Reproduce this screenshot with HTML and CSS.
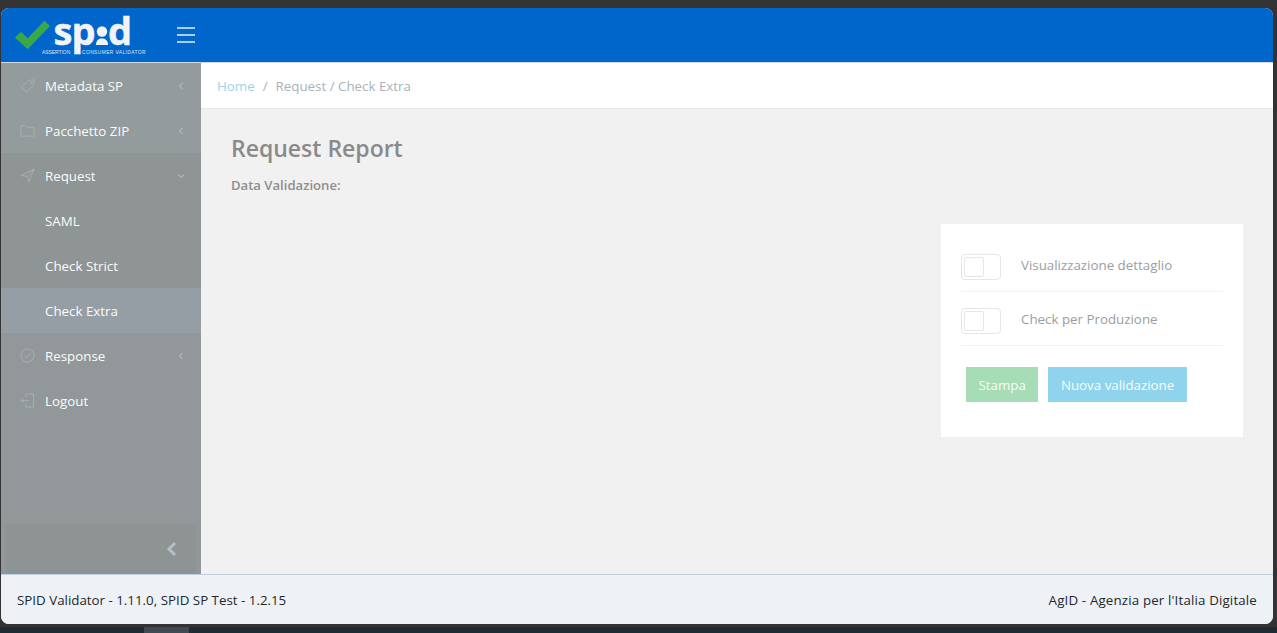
FILE: index.html
```html
<!DOCTYPE html>
<html lang="it">
<head>
<meta charset="utf-8">
<title>SPID Validator</title>
<link rel="stylesheet" href="styles.css">
</head>
<body>
<div class="window">
  <header class="topbar">
    <div class="brand">
      <svg class="logo" width="136" height="54" viewBox="0 0 136 54" aria-label="spid">
        <path class="check" d="M1 29.700 L7 23.700 L13.700 30.300 L30.300 12.700 L36 18 L13.700 41.300 Z"/>
        <text class="logo-word" x="39.500" y="37">sp</text>
        <circle class="logo-dot" cx="88" cy="23.500" r="5.200"/>
        <path class="logo-dot" d="M82 37 C82 32 85 30.500 88 30.500 C91 30.500 94 32 94 37 Z"/>
        <text class="logo-word" x="94" y="37">d</text>
        <text class="logo-sub" x="28" y="45.500">ASSERTION</text>
        <text class="logo-sub logo-sub-wide" x="68" y="45.500">CONSUMER VALIDATOR</text>
      </svg>
      <svg class="burger" width="18" height="16" viewBox="0 0 18 16"><path d="M0 1 H18 M0 8 H18 M0 15 H18"/></svg>
    </div>
  </header>
  <div class="middle">
    <aside class="sidebar">
      <nav class="menu">
        <a class="item lit">
          <svg class="ico" viewBox="0 0 16 16"><path d="M1 10 L9.500 2.500 L15 2 L14.500 7.500 L7 15 Z"/><circle cx="12" cy="5" r="1"/></svg>
          <span class="label">Metadata SP</span>
          <svg class="chev" viewBox="0 0 8 8"><path d="M5.500 1 L2.500 4 L5.500 7"/></svg>
        </a>
        <a class="item lit">
          <svg class="ico" viewBox="0 0 16 16"><path d="M1 3 H6 L7.500 4.500 H15 V14 H1 Z"/></svg>
          <span class="label">Pacchetto ZIP</span>
          <svg class="chev" viewBox="0 0 8 8"><path d="M5.500 1 L2.500 4 L5.500 7"/></svg>
        </a>
        <a class="item">
          <svg class="ico" viewBox="0 0 16 16"><path d="M15 1 L1 8 L8 9 L9.500 15 Z M15 1 L8 9"/></svg>
          <span class="label">Request</span>
          <svg class="chev" viewBox="0 0 8 8"><path d="M1 2.500 L4 5.500 L7 2.500"/></svg>
        </a>
        <a class="item"><span class="label sub">SAML</span></a>
        <a class="item"><span class="label sub">Check Strict</span></a>
        <a class="item active"><span class="label sub">Check Extra</span></a>
        <a class="item">
          <svg class="ico" viewBox="0 0 16 16"><circle cx="8" cy="8" r="7"/><path d="M4.500 8 L7 10.500 L11.500 5.500"/></svg>
          <span class="label">Response</span>
          <svg class="chev" viewBox="0 0 8 8"><path d="M5.500 1 L2.500 4 L5.500 7"/></svg>
        </a>
        <a class="item">
          <svg class="ico" viewBox="0 0 16 16"><path d="M6 4 V1 H14.500 V15 H6 V12 M1 8 H9 M3.500 5.500 L1 8 L3.500 10.500"/></svg>
          <span class="label">Logout</span>
        </a>
      </nav>
      <div class="collapse">
        <svg class="collapse-chev" viewBox="0 0 12 16"><path d="M9 2 L3 8 L9 14"/></svg>
      </div>
    </aside>
    <main class="content">
      <div class="crumbs">
        <a class="crumb-link">Home</a><span class="crumb-sep">/</span><span class="crumb-cur">Request / Check Extra</span>
      </div>
      <div class="page">
        <h1 class="title">Request Report</h1>
        <p class="date">Data Validazione:</p>
        <section class="card">
          <div class="opt">
            <span class="toggle"><span class="knob"></span></span>
            <span class="opt-label">Visualizzazione dettaglio</span>
          </div>
          <div class="opt">
            <span class="toggle"><span class="knob"></span></span>
            <span class="opt-label">Check per Produzione</span>
          </div>
          <div class="actions">
            <button class="btn green">Stampa</button>
            <button class="btn blue">Nuova validazione</button>
          </div>
        </section>
      </div>
    </main>
  </div>
  <footer class="footer">
    <span>SPID Validator - 1.11.0, SPID SP Test - 1.2.15</span>
    <span class="footer-right">AgID - Agenzia per l'Italia Digitale</span>
  </footer>
</div>
<div class="desktop"><span class="task"></span></div>
</body>
</html>
```
FILE: styles.css
```css
* { box-sizing: border-box; }
html, body { height: 100%; }
body {
  margin: 0;
  height: 633px;
  overflow: hidden;
  background: #333333;
  padding: 8px 4px 0 1px;
  font-family: "Open Sans", "Noto Sans", sans-serif;
  font-size: 13.330px;
  display: flex;
  flex-direction: column;
}
.window {
  height: 616px;
  flex: none;
  display: flex;
  flex-direction: column;
  border-radius: 8px;
  overflow: hidden;
  background: #f1f1f1;
}
.topbar {
  height: 55px;
  flex: none;
  background: #0066cc;
  border-bottom: 1px solid #d5d9dc;
}
.brand { display: flex; align-items: center; height: 100%; padding-left: 13px; }
.logo { display: block; flex: none; overflow: visible; }
.check { fill: #39a849; }
.logo-word { font-family: "Open Sans", sans-serif; font-weight: 700; font-size: 38px; fill: #f2f3f6; stroke: #f2f3f6; stroke-width: .5px; letter-spacing: -1px; }
.logo-dot { fill: #f2f3f6; }
.logo-sub { font-family: "Liberation Sans", sans-serif; font-size: 4.900px; fill: #dfe6f2; }
.logo-sub-wide { letter-spacing: .4px; }
.burger { flex: none; margin-left: 27px; fill: none; stroke: #e9f0fa; stroke-width: 1.500; }
.middle { flex: 1; display: flex; min-height: 0; }
.sidebar {
  width: 200px;
  flex: none;
  background: #929899;
  display: flex;
  flex-direction: column;
  justify-content: space-between;
}
.menu { display: flex; flex-direction: column; }
.item {
  height: 45px;
  display: flex;
  align-items: center;
  padding: 0 16px 0 19px;
  background: #8f9494;
  color: #fbfcfc;
}
.item.lit { background: #949b9d; }
.item.active { background: #969ea5; }
.item.active ~ .item { background: #929899; }
.ico {
  width: 15px;
  height: 15px;
  flex: none;
  margin-right: 10px;
  fill: none;
  stroke: #aab0b2;
  stroke-width: 1;
}
.label { flex: 1; }
.sub { padding-left: 25px; }
.chev { width: 8px; height: 8px; flex: none; fill: none; stroke: #aeb4b6; stroke-width: 1.200; }
.collapse {
  height: 50px;
  margin: 0 5px;
  background: #8e9394;
  display: flex;
  align-items: center;
  justify-content: flex-end;
  padding-right: 18px;
}
.collapse-chev { width: 12px; height: 16px; fill: none; stroke: #b4bec4; stroke-width: 3; }
.content { flex: 1; min-width: 0; display: flex; flex-direction: column; background: #f1f1f1; }
.crumbs {
  height: 46px;
  flex: none;
  background: #ffffff;
  border-bottom: 1px solid #e4e9ee;
  display: flex;
  align-items: center;
  padding-left: 16px;
  color: #a9b2ba;
}
.crumb-link { color: #9bd4ec; }
.crumb-sep { margin: 0 8px; }
.page { flex: 1; padding: 21px 30px 0 30px; display: flex; flex-direction: column; }
.title { margin: 0; font-size: 23px; line-height: 36px; font-weight: 600; color: #8a8a8a; }
.date { margin: 9px 0 0; font-size: 13.100px; line-height: 20px; font-weight: 600; color: #8e8e8e; }
.card {
  align-self: flex-end;
  width: 302px;
  height: 213px;
  margin-top: 29px;
  padding: 30px 20px 0;
  background: #ffffff;
}
.opt {
  display: flex;
  align-items: center;
  padding-bottom: 11px;
  margin-bottom: 16px;
  border-bottom: 1px solid #f0f1f2;
}
.toggle {
  width: 40px;
  height: 26px;
  flex: none;
  display: flex;
  align-items: center;
  padding-left: 2px;
  background: #ffffff;
  border: 1px solid #e6e6e6;
  border-radius: 4px;
}
.knob { width: 20px; height: 20px; border: 1px solid #e6e6e6; border-radius: 2px; background: #fff; }
.opt-label { margin: 0 0 4px 20px; color: #9a9ea2; }
.actions { display: flex; gap: 10px; padding: 5px 0 0 5px; }
.btn {
  height: 35px;
  padding: 0 12.500px;
  border: 0;
  color: #f8fcfa;
  font: inherit;
}
.green { background: #a6dcb6; }
.blue { background: #8fd4ec; }
.footer {
  height: 50px;
  flex: none;
  display: flex;
  justify-content: space-between;
  align-items: center;
  padding: 0 16px;
  background: #eef2f6;
  border-top: 1px solid #c1d0df;
  color: #23282c;
}
.footer-right { letter-spacing: .15px; }
.desktop { flex: 1; margin: 3px -4px 0 -1px; background: #1f2b31; padding-left: 144px; }
.task { display: block; width: 45px; height: 100%; background: #414a50; }
```
